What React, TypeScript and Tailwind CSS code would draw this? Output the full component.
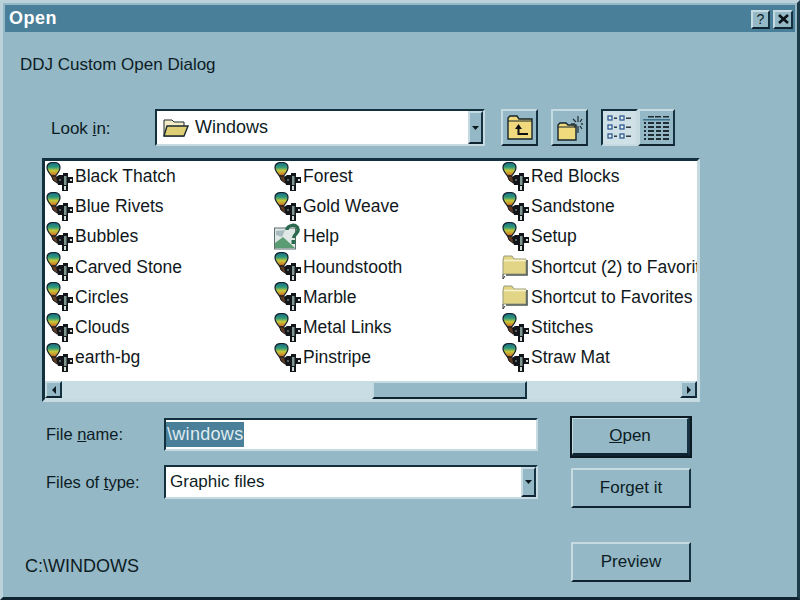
import React from "react";

const Wallpaper = () => (
  <svg width="28" height="30" viewBox="0 0 28 30" className="shrink-0">
    <defs>
      <linearGradient id="rb" x1="0" y1="0" x2="0" y2="1">
        <stop offset="0" stopColor="#1b6a88" />
        <stop offset="0.35" stopColor="#2f9a78" />
        <stop offset="0.6" stopColor="#c4c83a" />
        <stop offset="0.85" stopColor="#d08a2a" />
        <stop offset="1" stopColor="#a8481f" />
      </linearGradient>
    </defs>
    <path d="M1 5.5 C1 2 4 0.5 7.5 0.5 C11 0.5 14 2 14 5.5 C14 9 11 12 9.5 14 L5.5 14 C4 12 1 9 1 5.5Z" fill="url(#rb)" stroke="#10222c" strokeWidth="1.2" />
    <path d="M5.5 14 L9.5 14 L12 17 L15 21 L11 21 L7 18 Z" fill="#5e3a22" stroke="#15181a" strokeWidth="1" />
    <path d="M10 15 L13 13 L17 13 L17 11 L22 11 L22 15 L27 15 L27 21 L22 21 L22 29 L16 29 L16 23 L12 23 Z" fill="#12151a" />
    <rect x="18" y="14" width="2.5" height="9" fill="#7f978f" />
    <rect x="18" y="24" width="2" height="4" fill="#d3dbd7" />
    <rect x="24" y="17" width="2" height="2" fill="#d8dcd8" />
    <rect x="13" y="17" width="2" height="2" fill="#59635f" />
  </svg>
);

const FolderIcon = () => (
  <svg width="28" height="26" viewBox="0 0 28 26" className="shrink-0">
    <path d="M1 6 L2 2 L10 2 L12 5 L24 5 L24 20 L1 20 Z" fill="#e2d686" stroke="#9a9a7a" strokeWidth="1" />
    <path d="M2 6.5 L24 6.5" stroke="#f7f2cc" strokeWidth="1.6" />
    <path d="M25 6 L25 21 L4 21" stroke="#4a564e" strokeWidth="1.6" fill="none" />
    <path d="M1 20 L1 25 M1 25 L3 22" stroke="#333" strokeWidth="1" fill="none" />
  </svg>
);

const HelpIcon = () => (
  <svg width="28" height="28" viewBox="0 0 28 28" className="shrink-0">
    <rect x="0.5" y="5" width="21" height="21" fill="#dfe8e4" stroke="#5b6f70" strokeWidth="1" />
    <path d="M1 20 L9 14 L21 25 L1 25 Z" fill="#5c9c74" />
    <path d="M2 8 L11 7 L8 14 L2 12 Z" fill="#a8bcc0" />
    <path d="M13 7 C13 2 23 0 24 6 C25 10 20 11 19.5 15" fill="none" stroke="#2a6a4e" strokeWidth="3.5" />
    <rect x="17.5" y="17" width="4" height="4" fill="#2a6a4e" />
  </svg>
);

const SmallFolder = () => (
  <svg width="26" height="20" viewBox="0 0 26 20">
    <path d="M1 5 L1 2 L9 2 L11 4 L21 4 L21 18 L1 18 Z" fill="#f3ecc6" stroke="#1b2a30" strokeWidth="1" />
    <path d="M1 18 L4 8 L25 8 L21 18 Z" fill="#dfcf74" stroke="#1b2a30" strokeWidth="1.4" />
  </svg>
);

const UpIcon = () => (
  <svg width="26" height="25" viewBox="0 0 26 25">
    <path d="M1 24 L1 3 L3 1 L10 1 L12 4 L25 4 L25 24 Z" fill="#f1da7e" stroke="#17252b" strokeWidth="1.4" />
    <path d="M1 6 L25 6" stroke="#17252b" strokeWidth="1" />
    <path d="M8 14 L11.5 9 L15 14 Z M10.5 13 L12.5 13 L12.5 18 L21 18 L21 20 L10.5 20 Z" fill="#111" />
  </svg>
);

const NewFolderIcon = () => (
  <svg width="26" height="26" viewBox="0 0 26 26">
    <path d="M1 25 L1 10 L3 8 L9 8 L11 10 L19 10 L19 25 Z" fill="#f1da7e" stroke="#17252b" strokeWidth="1.4" />
    <path d="M1 12 L19 12" stroke="#17252b" strokeWidth="1" />
    <path d="M21 1 L21 7 M21 11 L21 18 M14 9 L18 9 M24 9 L26 9 M16 4 L19 7 M23 11 L25 14 M23 7 L25 4 M18 11 L17 12" stroke="#26343c" strokeWidth="1.3" />
  </svg>
);

const ListViewIcon = () => (
  <svg width="25" height="25" viewBox="0 0 25 25">
    {[1, 10, 19].map((y) => (
      <g key={y}>
        <rect x="1" y={y} width="4" height="4" fill="#e4eef0" stroke="#234f8a" strokeWidth="1.2" />
        <rect x="7" y={y + 1.5} width="3" height="1.4" fill="#1f2c34" />
        <rect x="13" y={y} width="4" height="4" fill="#e4eef0" stroke="#234f8a" strokeWidth="1.2" />
        <rect x="19" y={y + 1.5} width="5" height="1.4" fill="#1f2c34" />
      </g>
    ))}
  </svg>
);

const DetailIcon = () => (
  <svg width="27" height="24" viewBox="0 0 27 24">
    <rect x="5" y="0" width="6" height="1.5" fill="#1f2c34" />
    <rect x="12" y="0" width="6" height="1.5" fill="#1f2c34" />
    <rect x="20" y="0" width="6" height="1.5" fill="#1f2c34" />
    <rect x="0" y="3" width="27" height="1.5" fill="#3b6f8a" />
    {[6, 10, 14, 18, 22].map((y) => (
      <g key={y}>
        <rect x="1" y={y} width="2" height="2" fill="#1f2c34" />
        <rect x="5" y={y} width="6" height="2" fill="#1f2c34" />
        <rect x="13" y={y} width="5" height="2" fill="#1f2c34" />
        <rect x="20" y={y} width="6" height="2" fill="#1f2c34" />
      </g>
    ))}
  </svg>
);

const Arrow = ({ dir }: { dir: "down" | "left" | "right" }) => {
  const p = dir === "down" ? "M0 0 L7 0 L3.5 4 Z" : dir === "left" ? "M5 0 L5 8 L1 4 Z" : "M1 0 L1 8 L5 4 Z";
  return (
    <svg width={dir === "down" ? 7 : 6} height={dir === "down" ? 4 : 8} viewBox={dir === "down" ? "0 0 7 4" : "0 0 6 8"}>
      <path d={p} fill="#0d1a20" />
    </svg>
  );
};

const raised = "border-t-2 border-l-2 border-r-2 border-b-2 border-t-[#c6dae2] border-l-[#c6dae2] border-r-[#163240] border-b-[#0f2430] bg-[#94b8c6]";
const sunken = "border-t-2 border-l-2 border-r-2 border-b-2 border-t-[#12303e] border-l-[#12303e] border-r-[#c6dae2] border-b-[#c6dae2] bg-white";

const ScrollBtn = ({ dir }: { dir: "left" | "right" }) => (
  <div className={`w-[17px] h-[17px] flex items-center justify-center ${raised}`}>
    <Arrow dir={dir} />
  </div>
);

const DropBtn = () => (
  <div className={`w-[15px] flex items-center justify-center ${raised}`}>
    <Arrow dir="down" />
  </div>
);

const Tool = ({ children, cls = "" }: { children: React.ReactNode; cls?: string }) => (
  <div className={`w-[37px] h-[37px] flex items-center justify-center ${cls}`}>{children}</div>
);

const Btn = ({ children, def }: { children: React.ReactNode; def?: boolean }) => (
  <div className={`w-[120px] h-[40px] flex items-center justify-center text-[17px] text-[#0d1c24] ${raised} ${def ? "outline-2 outline-[#0b1a22] -outline-offset-1 border-b-4 border-r-4" : ""}`}>
    {children}
  </div>
);

type Item = { name: string; kind?: "w" | "f" | "h" };
const columns: Item[][] = [
  [{ name: "Black Thatch" }, { name: "Blue Rivets" }, { name: "Bubbles" }, { name: "Carved Stone" }, { name: "Circles" }, { name: "Clouds" }, { name: "earth-bg" }],
  [{ name: "Forest" }, { name: "Gold Weave" }, { name: "Help", kind: "h" }, { name: "Houndstooth" }, { name: "Marble" }, { name: "Metal Links" }, { name: "Pinstripe" }],
  [{ name: "Red Blocks" }, { name: "Sandstone" }, { name: "Setup" }, { name: "Shortcut (2) to Favorites", kind: "f" }, { name: "Shortcut to Favorites", kind: "f" }, { name: "Stitches" }, { name: "Straw Mat" }],
];

export default function App() {
  return (
    <div
      className="w-[800px] h-[600px] overflow-hidden bg-[#94b8c6] text-[#0d1c24] flex flex-col border-t-[3px] border-l-[3px] border-r-[3px] border-b-[3px] border-t-[#bcd2da] border-l-[#bcd2da] border-r-[#1d3c4a] border-b-[#0f2430]"
      style={{ fontFamily: '"Liberation Sans", Arial, sans-serif' }}
    >
      <div className="mx-[2px] mt-[2px] h-[27px] shrink-0 bg-[#4a7f99] flex items-center justify-between pl-[4px] pr-[2px]">
        <span className="text-white font-bold text-[18px] tracking-[0.5px]">Open</span>
        <div className="flex gap-[3px] mt-[1px]">
          <div className={`w-[19px] h-[19px] flex items-center justify-center text-[14px] leading-none ${raised}`}>?</div>
          <div className={`w-[20px] h-[19px] flex items-center justify-center ${raised}`}>
            <svg width="11" height="10" viewBox="0 0 11 10">
              <path d="M1 1 L10 9 M10 1 L1 9" stroke="#0a1418" strokeWidth="2.6" />
            </svg>
          </div>
        </div>
      </div>

      <div className="text-[17px] leading-[22px] mt-[22px] ml-[17px]">DDJ Custom Open Dialog</div>

      <div className="flex items-stretch h-[37px] mt-[33px] ml-[48px]">
        <div className="w-[104px] flex items-center text-[17px] pt-[2px]">
          <span>Look <span className="underline">i</span>n:</span>
        </div>
        <div className={`w-[330px] flex items-stretch ${sunken}`}>
          <div className="flex-1 flex items-center gap-[6px] pl-[6px] text-[18px]">
            <SmallFolder />
            <span>Windows</span>
          </div>
          <DropBtn />
        </div>
        <div className="flex ml-[16px] gap-[13px]">
          <Tool cls={raised}><UpIcon /></Tool>
          <Tool cls={raised}><NewFolderIcon /></Tool>
          <div className="flex">
            <Tool cls="border-t-2 border-l-2 border-r-2 border-b-2 border-t-[#12303e] border-l-[#12303e] border-r-[#c6dae2] border-b-[#c6dae2] bg-[#cfe0e6]"><ListViewIcon /></Tool>
            <Tool cls={raised}><DetailIcon /></Tool>
          </div>
        </div>
      </div>

      <div className={`ml-[39px] mt-[12px] w-[658px] h-[244px] flex flex-col overflow-hidden ${sunken} !border-[3px] !border-t-[#12303e] !border-l-[#12303e] !border-r-[#c6dae2] !border-b-[#c6dae2]`}>
        <div className="flex-1 flex pl-[1px] pt-[1px] overflow-hidden">
          {columns.map((col, i) => (
            <div key={i} className="w-[228px] shrink-0 flex flex-col">
              {col.map((it) => (
                <div key={it.name} className="h-[30.1px] flex items-center gap-[1px] text-[17.5px] whitespace-nowrap text-[#11181c]">
                  {it.kind === "f" ? <FolderIcon /> : it.kind === "h" ? <HelpIcon /> : <Wallpaper />}
                  <span className="leading-none">{it.name}</span>
                </div>
              ))}
            </div>
          ))}
        </div>
        <div className="h-[18px] shrink-0 flex bg-[#c9dde4]">
          <ScrollBtn dir="left" />
          <div className="flex-1 pl-[310px]">
            <div className={`w-[155px] h-[18px] ${raised}`} />
          </div>
          <ScrollBtn dir="right" />
        </div>
      </div>

      <div className="flex flex-1 mt-[15px]">
        <div className="w-[568px] flex flex-col">
          <div className="flex items-center h-[33px] ml-[43px] mt-[1px]">
            <div className="w-[118px] text-[16.5px]">File <span className="underline">n</span>ame:</div>
            <div className={`w-[374px] h-[33px] flex items-center text-[18px] ${sunken}`}>
              <span className="bg-[#4a7f99] text-[#dfecf0] leading-[25px] pl-[1px] pr-[1px] tracking-[0.3px]">\windows</span>
            </div>
          </div>
          <div className="flex items-center h-[34px] ml-[43px] mt-[14px]">
            <div className="w-[118px] text-[16.5px]">Files of <span className="underline">t</span>ype:</div>
            <div className={`w-[374px] h-[34px] flex items-stretch ${sunken}`}>
              <div className="flex-1 flex items-center pl-[4px] text-[17px]">Graphic files</div>
              <DropBtn />
            </div>
          </div>
          <div className="ml-[22px] mt-[55px] text-[18px] leading-[24px]">C:\WINDOWS</div>
        </div>
        <div className="flex flex-col">
          <Btn def><span><span className="underline">O</span>pen</span></Btn>
          <div className="mt-[11px]"><Btn>Forget it</Btn></div>
          <div className="mt-[34px]"><Btn>Preview</Btn></div>
        </div>
      </div>
    </div>
  );
}
